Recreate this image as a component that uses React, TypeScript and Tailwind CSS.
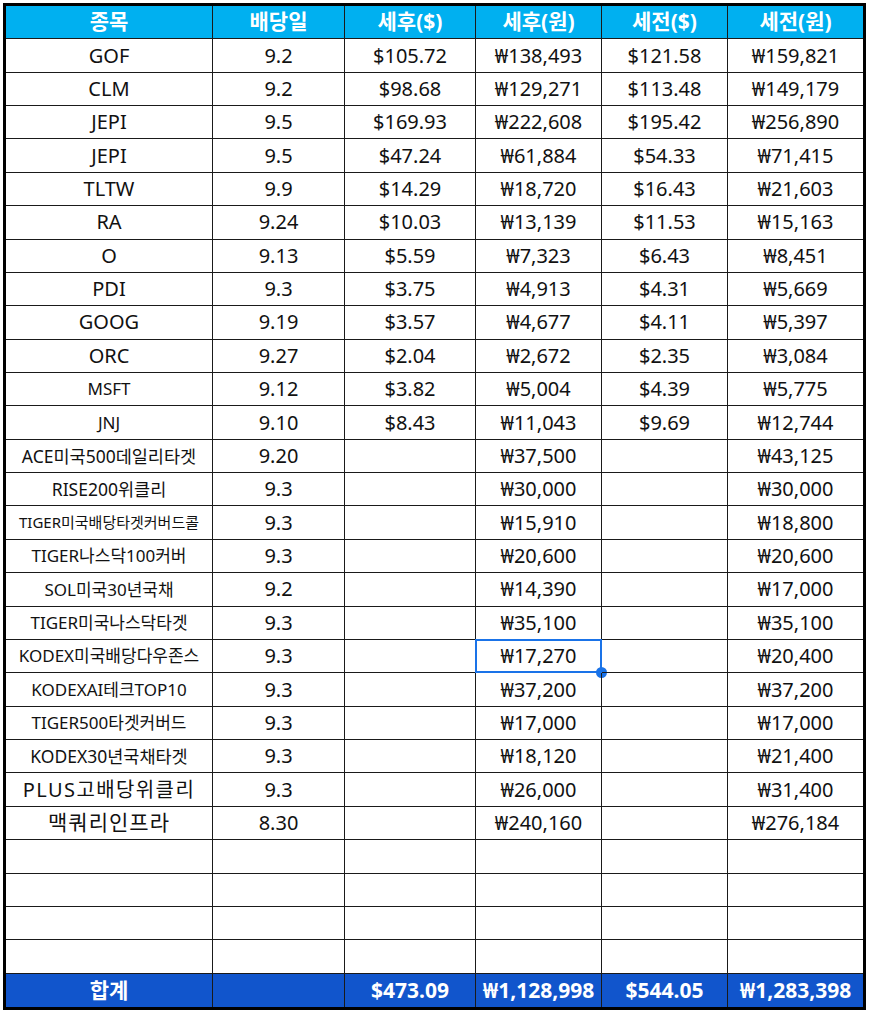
import React from "react";

type Row = [string, string, string, string, string, string];

const ROWS: Row[] = [
  ["GOF", "9.2", "$105.72", "₩138,493", "$121.58", "₩159,821"],
  ["CLM", "9.2", "$98.68", "₩129,271", "$113.48", "₩149,179"],
  ["JEPI", "9.5", "$169.93", "₩222,608", "$195.42", "₩256,890"],
  ["JEPI", "9.5", "$47.24", "₩61,884", "$54.33", "₩71,415"],
  ["TLTW", "9.9", "$14.29", "₩18,720", "$16.43", "₩21,603"],
  ["RA", "9.24", "$10.03", "₩13,139", "$11.53", "₩15,163"],
  ["O", "9.13", "$5.59", "₩7,323", "$6.43", "₩8,451"],
  ["PDI", "9.3", "$3.75", "₩4,913", "$4.31", "₩5,669"],
  ["GOOG", "9.19", "$3.57", "₩4,677", "$4.11", "₩5,397"],
  ["ORC", "9.27", "$2.04", "₩2,672", "$2.35", "₩3,084"],
  ["MSFT", "9.12", "$3.82", "₩5,004", "$4.39", "₩5,775"],
  ["JNJ", "9.10", "$8.43", "₩11,043", "$9.69", "₩12,744"],
  ["ACE미국500데일리타겟", "9.20", "", "₩37,500", "", "₩43,125"],
  ["RISE200위클리", "9.3", "", "₩30,000", "", "₩30,000"],
  ["TIGER미국배당타겟커버드콜", "9.3", "", "₩15,910", "", "₩18,800"],
  ["TIGER나스닥100커버", "9.3", "", "₩20,600", "", "₩20,600"],
  ["SOL미국30년국채", "9.2", "", "₩14,390", "", "₩17,000"],
  ["TIGER미국나스닥타겟", "9.3", "", "₩35,100", "", "₩35,100"],
  ["KODEX미국배당다우존스", "9.3", "", "₩17,270", "", "₩20,400"],
  ["KODEXAI테크TOP10", "9.3", "", "₩37,200", "", "₩37,200"],
  ["TIGER500타겟커버드", "9.3", "", "₩17,000", "", "₩17,000"],
  ["KODEX30년국채타겟", "9.3", "", "₩18,120", "", "₩21,400"],
  ["PLUS고배당위클리", "9.3", "", "₩26,000", "", "₩31,400"],
  ["맥쿼리인프라", "8.30", "", "₩240,160", "", "₩276,184"],
  ["", "", "", "", "", ""],
  ["", "", "", "", "", ""],
  ["", "", "", "", "", ""],
  ["", "", "", "", "", ""],
];

const NAME_SIZE: Record<string, string> = {
  MSFT: "text-[17px]",
  JNJ: "text-[17px]",
  "ACE미국500데일리타겟": "text-[17.5px]",
  "RISE200위클리": "text-[17.5px]",
  "TIGER미국배당타겟커버드콜": "text-[15px]",
  "TIGER나스닥100커버": "text-[17px]",
  "SOL미국30년국채": "text-[17px]",
  "TIGER미국나스닥타겟": "text-[17px]",
  "KODEX미국배당다우존스": "text-[17px]",
  "KODEXAI테크TOP10": "text-[17px]",
  "TIGER500타겟커버드": "text-[17px]",
  "KODEX30년국채타겟": "text-[17.5px]",
  "PLUS고배당위클리": "text-[20px] tracking-[1.4px]",
  "맥쿼리인프라": "text-[21px] tracking-[1px]",
};

const HEAD = ["종목", "배당일", "세후($)", "세후(원)", "세전($)", "세전(원)"];
const TOTAL = ["합계", "", "$473.09", "₩1,128,998", "$544.05", "₩1,283,398"];

function cellBorder(col: number, last: boolean) {
  return `${col < 5 ? "border-r" : ""} ${last ? "" : "border-b"} border-[#1a1a1a]`;
}

export default function App() {
  return (
    <div className="min-h-screen bg-white pt-[3px] pl-[3px] font-['Noto_Sans','Noto_Sans_CJK_KR',sans-serif]">
      <div className="w-[863px] border-[3px] border-black">
        <div className="grid h-[1001px] grid-cols-[207px_132px_131px_126px_126px_135px] grid-rows-[repeat(30,minmax(0,1fr))]">
          {HEAD.map((h, c) => (
            <div key={"h" + c} className={`flex items-center justify-center bg-[#00b0f0] text-[21px] font-bold text-white ${cellBorder(c, false)}`}>
              {h}
            </div>
          ))}

          {ROWS.map((r, i) =>
            r.map((v, c) => {
              const selected = i === 18 && c === 3;
              const size = c === 0 ? NAME_SIZE[v] ?? "text-[20px]" : "text-[20px]";
              return (
                <div key={i + "-" + c} className={`relative flex items-center justify-center whitespace-nowrap text-[#111] ${size} ${cellBorder(c, false)}`}>
                  {v}
                  {selected && (
                    <>
                      <div className="absolute -top-[1px] -left-[1px] -right-[1px] -bottom-[1px] border-2 border-[#1a73e8]" />
                      <div className="absolute -right-[6px] -bottom-[6px] h-[11px] w-[11px] rounded-full bg-[#1a73e8]" />
                    </>
                  )}
                </div>
              );
            })
          )}

          {TOTAL.map((t, c) => (
            <div key={"t" + c} className={`flex items-center justify-center bg-[#1155cc] text-[21px] font-bold text-white ${cellBorder(c, true)}`}>
              {t}
            </div>
          ))}
        </div>
      </div>
    </div>
  );
}
